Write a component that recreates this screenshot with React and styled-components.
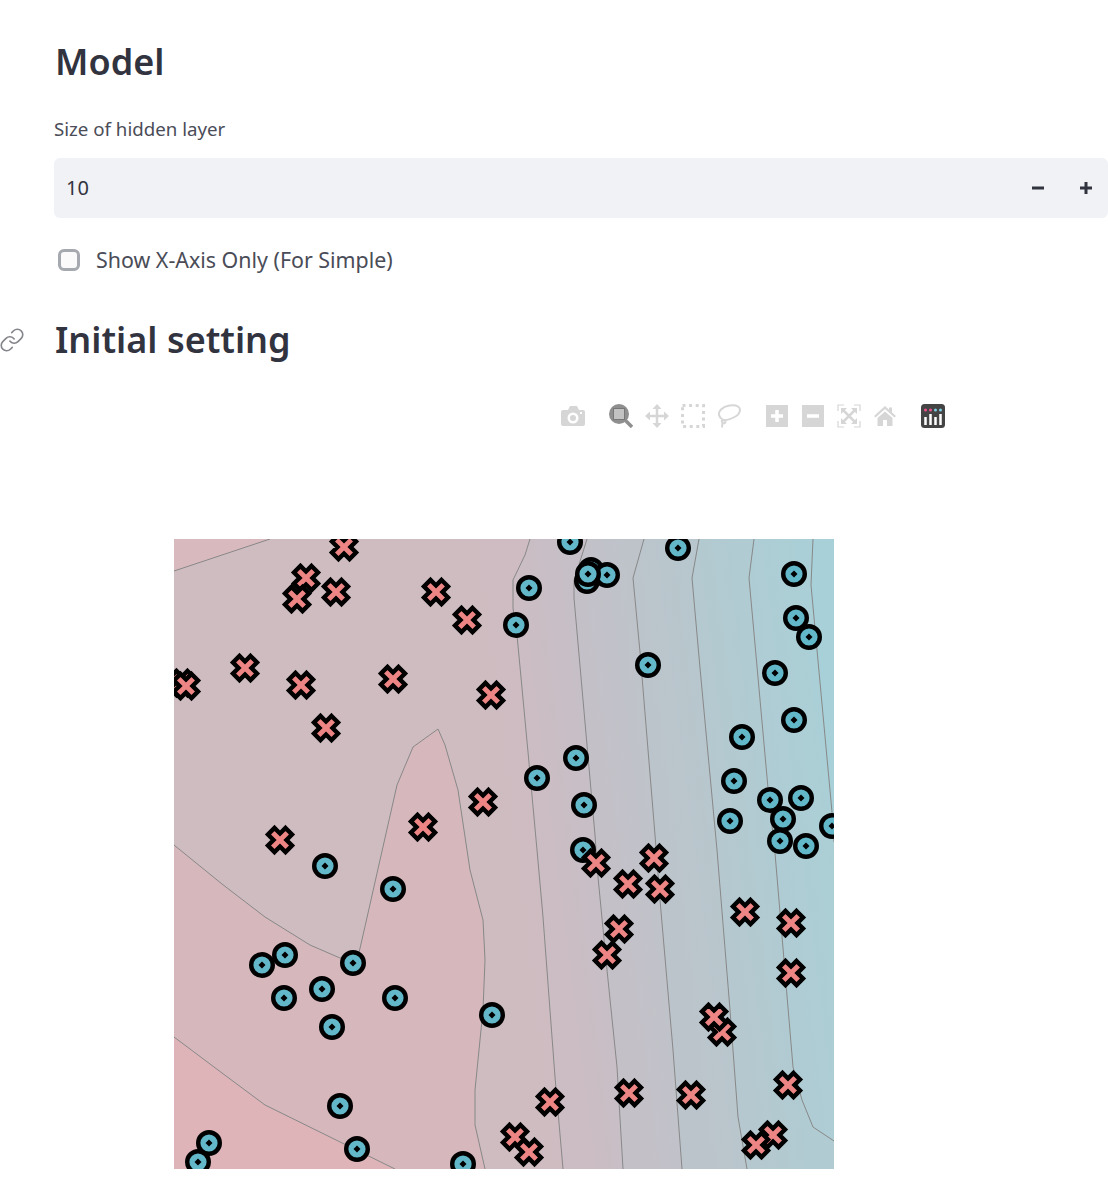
import React from 'react'
import styled, { createGlobalStyle } from 'styled-components'
import { Link } from 'lucide-react'

const GlobalStyle = createGlobalStyle`
  html, body {
    margin: 0;
    padding: 0;
    background: #fff;
    overflow: hidden;
  }
  body {
    font-family: "Noto Sans", "Lato", sans-serif;
    color: #31333f;
  }
`

// contour lines, page coordinates (the svg viewBox starts at 174,539)
const LINE_CORNER = [[174, 571], [270, 539]]
const LINE_BOTTOM = [[174, 1037], [222, 1073], [265, 1105], [330, 1137], [395, 1169]]
const LINE_BUMP = [
  [174, 845], [222, 884], [265, 917], [310, 945], [340, 958], [358, 957], [366, 922], [380, 860], [397, 785],
  [413, 747], [438, 729], [445, 745], [458, 790], [470, 870], [483, 920], [485, 960], [483, 1010], [475, 1090],
  [475, 1125], [485, 1169],
]
const BANDS = [
  { id: 'i', from: '#afccd4', to: '#abcfd6', points: [[813, 539], [811, 585], [832, 812], [834, 842], [834, 1169], [174, 1169], [174, 539]], line: [[813, 539], [811, 585], [832, 812], [834, 842]] },
  { id: 'h', from: '#b5c8cf', to: '#b0cbd2', points: [[754, 539], [749, 578], [768, 788], [775, 853], [793, 1067], [802, 1100], [813, 1127], [834, 1141], [834, 1169], [174, 1169], [174, 539]], line: [[754, 539], [749, 578], [768, 788], [775, 853], [793, 1067], [802, 1100], [813, 1127], [834, 1141]] },
  { id: 'g', from: '#bcc4cb', to: '#b7c7cd', points: [[699, 539], [692, 578], [700, 668], [717, 850], [730, 1010], [738, 1117], [747, 1169], [174, 1169], [174, 539]], line: [[699, 539], [692, 578], [700, 668], [717, 850], [730, 1010], [738, 1117], [747, 1169]] },
  { id: 'f', from: '#c4c0c8', to: '#bec3ca', points: [[644, 539], [633, 578], [640, 652], [655, 835], [660, 900], [673, 1050], [682, 1169], [174, 1169], [174, 539]], line: [[644, 539], [633, 578], [640, 652], [655, 835], [660, 900], [673, 1050], [682, 1169]] },
  { id: 'e', from: '#cbbdc3', to: '#c6bfc7', points: [[587, 539], [582, 555], [574, 580], [574, 598], [587, 745], [595, 835], [598, 877], [607, 970], [617, 1067], [623, 1169], [174, 1169], [174, 539]], line: [[587, 539], [582, 555], [574, 580], [574, 598], [587, 745], [595, 835], [598, 877], [607, 970], [617, 1067], [623, 1169]] },
  { id: 'd', from: '#cfbcc1', to: '#cebcc2', points: [[530, 539], [525, 555], [513, 580], [513, 608], [517, 635], [528, 752], [537, 850], [543, 917], [555, 1077], [563, 1169], [174, 1169], [174, 539]], line: [[530, 539], [525, 555], [513, 580], [513, 608], [517, 635], [528, 752], [537, 850], [543, 917], [555, 1077], [563, 1169]] },
]

const CIRCLES = [
  [570, 542], [678, 548], [591, 570], [587, 581], [607, 575], [588, 574], [529, 588], [516, 625], [794, 574], [796, 618],
  [809, 637], [648, 665], [775, 673], [794, 720], [742, 737], [576, 758], [537, 778], [734, 781], [770, 800], [801, 798],
  [783, 819], [730, 821], [584, 805], [780, 841], [806, 846], [832, 826], [583, 850], [325, 866], [393, 889], [353, 963],
  [285, 955], [262, 965], [322, 989], [284, 998], [395, 998], [332, 1027], [492, 1015], [340, 1106], [198, 1162],
  [209, 1143], [357, 1149], [463, 1164],
]

const CROSSES = [
  [344, 547], [306, 578], [297, 599], [336, 592], [436, 592], [467, 620], [245, 668], [182, 683], [186, 686], [301, 685],
  [393, 679], [491, 695], [326, 728], [483, 802], [423, 827], [280, 840], [596, 863], [654, 858], [628, 884], [660, 889],
  [619, 929], [607, 955], [745, 912], [791, 923], [791, 973], [722, 1032], [714, 1017], [788, 1085], [773, 1135],
  [756, 1145], [629, 1093], [691, 1095], [550, 1102], [515, 1137], [529, 1152],
]

const toPoints = (list) => list.map((p) => p.join(',')).join(' ')

const Contours = () => (
  <>
    <defs>
      {BANDS.map((b) => {
        const [mx, my] = b.line[2]
        return (
          <linearGradient key={b.id} id={`band-${b.id}`} gradientUnits="userSpaceOnUse" x1={mx - 55} y1={my + 7} x2={mx} y2={my}>
            <stop offset="0" stopColor={b.from} />
            <stop offset="1" stopColor={b.to} />
          </linearGradient>
        )
      })}
    </defs>
    <rect x="174" y="539" width="660" height="630" fill="#a7d0d8" />
    {BANDS.map((b) => (
      <polygon key={b.id} points={toPoints(b.points)} fill={`url(#band-${b.id})`} />
    ))}
    <polygon points={toPoints([...LINE_BUMP, [174, 1169]])} fill="#d6b7bc" />
    <polygon points={toPoints([...LINE_CORNER, [174, 539]])} fill="#d8b9be" />
    <polygon points={toPoints([...LINE_BOTTOM, [174, 1169]])} fill="#deb4b9" />
    {[LINE_CORNER, LINE_BOTTOM, LINE_BUMP, ...BANDS.map((b) => b.line)].map((line, i) => (
      <polyline key={i} points={toPoints(line)} fill="none" stroke="#888" strokeWidth="1" />
    ))}
  </>
)

const CircleDot = ({ x, y }) => (
  <g transform={`translate(${x} ${y})`}>
    <circle r="10.800" fill="#62b7c8" stroke="#000" strokeWidth="4.400" />
    <polygon points="0,-3.500 3.500,0 0,3.500 -3.500,0" fill="#000" />
  </g>
)

const Cross = ({ x, y }) => (
  <g transform={`translate(${x} ${y}) rotate(45)`}>
    <polygon
      points="-4.600,-12.400 4.600,-12.400 4.600,-4.600 12.400,-4.600 12.400,4.600 4.600,4.600 4.600,12.400 -4.600,12.400 -4.600,4.600 -12.400,4.600 -12.400,-4.600 -4.600,-4.600"
      fill="#ee8585"
      stroke="#000"
      strokeWidth="4.400"
    />
  </g>
)

const GREY = '#d6d6d6'

const Icon = ({ children }) => (
  <svg width="24" height="24" viewBox="0 0 24 24">{children}</svg>
)

const CameraIcon = () => (
  <Icon>
    <path
      fillRule="evenodd"
      fill={GREY}
      d="M2 6h5l2-4h7l2 4h4a2 2 0 0 1 2 2v12a2 2 0 0 1-2 2H2a2 2 0 0 1-2-2V8a2 2 0 0 1 2-2zM12 8.500a5.500 5.500 0 1 0 0 11 5.500 5.500 0 0 0 0-11zM12 11a3 3 0 1 1 0 6 3 3 0 0 1 0-6z"
    />
    <rect x="19" y="8" width="2" height="2" fill="#fff" />
  </Icon>
)

const ZoomIcon = () => (
  <Icon>
    <circle cx="10" cy="10" r="10" fill="#8f8f8f" />
    <rect x="4.500" y="4.500" width="11" height="11" fill="#c2c2c2" stroke="#777" strokeWidth="1" />
    <path d="M16.500 16.500L23 23" stroke="#8f8f8f" strokeWidth="3.500" />
  </Icon>
)

const PanIcon = () => (
  <Icon>
    <path d="M12 4v16M4 12h16" stroke={GREY} strokeWidth="2.500" />
    <path d="M12 0l4.500 5h-9zM12 24l4.500-5h-9zM0 12l5-4.500v9zM24 12l-5-4.500v9z" fill={GREY} />
  </Icon>
)

const BoxIcon = () => (
  <Icon>
    <rect x="1.500" y="1.500" width="21" height="21" fill="none" stroke={GREY} strokeWidth="3" strokeDasharray="3 3.600" />
  </Icon>
)

const LassoIcon = () => (
  <Icon>
    <path
      d="M6 16C1.500 13 .5 9 4 5.500 8 1.500 17 0 21 2.500c3.500 2.200 2 7.500-2.500 10-3.500 2-8 3.500-11 3.500-2.500 0-3.500 1-2 2.500s3 .8 3-.7c0-2-2.500-2.500-3-1M5.500 18L5 23.500"
      fill="none"
      stroke={GREY}
      strokeWidth="2"
    />
  </Icon>
)

const ZoomInIcon = () => (
  <Icon>
    <rect x="1" y="1" width="22" height="22" fill={GREY} />
    <path d="M12 6v12M6 12h12" stroke="#fff" strokeWidth="3.500" />
  </Icon>
)

const ZoomOutIcon = () => (
  <Icon>
    <rect x="1" y="1" width="22" height="22" fill={GREY} />
    <path d="M6 12h12" stroke="#fff" strokeWidth="3.500" />
  </Icon>
)

const AutoscaleIcon = () => (
  <Icon>
    <path d="M7 1H1v6M17 1h6v6M7 23H1v-6M17 23h6v-6" fill="none" stroke={GREY} strokeWidth="1.200" />
    <path d="M6 6l12 12M18 6L6 18" stroke={GREY} strokeWidth="2.500" />
    <path d="M4 4h6l-6 6zM20 4h-6l6 6zM4 20h6l-6-6zM20 20h-6l6-6z" fill={GREY} />
  </Icon>
)

const HomeIcon = () => (
  <Icon>
    <path d="M12 2L1 12l1.500 1.500L12 5l9.500 8.500L23 12l-4-3.600V3.500h-3v2.200z" fill={GREY} />
    <path d="M4.500 14L12 7.500l7.500 6.500v8h-5.500v-6h-4v6H4.500z" fill={GREY} />
  </Icon>
)

const LOGO_BARS = [
  { x: 4.500, top: 13, dot: '#f1508f' },
  { x: 9.500, top: 10, dot: '#f1508f' },
  { x: 14.500, top: 13, dot: '#7fd0e6' },
  { x: 19.500, top: 10, dot: '#7fd0e6' },
]

const LogoIcon = () => (
  <Icon>
    <rect width="24" height="24" rx="3.500" fill="#444" />
    {LOGO_BARS.map((b) => (
      <g key={b.x}>
        <circle cx={b.x} cy="6" r="1.500" fill={b.dot} />
        <path d={`M${b.x} ${b.top}V21`} stroke="#fff" strokeWidth="2.500" />
      </g>
    ))}
  </Icon>
)

const MODE_GROUPS = [
  [CameraIcon],
  [ZoomIcon, PanIcon, BoxIcon, LassoIcon],
  [ZoomInIcon, ZoomOutIcon, AutoscaleIcon, HomeIcon],
  [LogoIcon],
]

export default function App() {
  return (
    <Page>
      <GlobalStyle />
      <Heading>Model</Heading>
      <FieldLabel>Size of hidden layer</FieldLabel>
      <NumberField>
        <NumberValue>10</NumberValue>
        <Stepper>
          <svg width="12" height="12" viewBox="0 0 12 12"><path d="M0 6h12" stroke="#31333f" strokeWidth="3" /></svg>
        </Stepper>
        <Stepper>
          <svg width="12" height="12" viewBox="0 0 12 12"><path d="M0 6h12M6 0v12" stroke="#31333f" strokeWidth="3" /></svg>
        </Stepper>
      </NumberField>
      <CheckRow>
        <CheckBox />
        <CheckText>Show X-Axis Only (For Simple)</CheckText>
      </CheckRow>
      <AnchoredHeading>
        <AnchorIcon><Link size={26} strokeWidth={1.5} /></AnchorIcon>
        Initial setting
      </AnchoredHeading>
      <ModeBar>
        {MODE_GROUPS.map((group, i) => (
          <ModeGroup key={i}>
            {group.map((Glyph, j) => (
              <ModeButton key={j}><Glyph /></ModeButton>
            ))}
          </ModeGroup>
        ))}
      </ModeBar>
      <Plot viewBox="174 539 660 630">
        <Contours />
        {CIRCLES.map(([x, y], i) => <CircleDot key={i} x={x} y={y} />)}
        {CROSSES.map(([x, y], i) => <Cross key={i} x={x} y={y} />)}
      </Plot>
    </Page>
  )
}

const Page = styled.div`
  height: 1191px;
  padding: 39px 0 0 54px;
  box-sizing: border-box;
`

const Heading = styled.h2`
  margin: 0;
  padding-left: 1px;
  font-size: 36px;
  line-height: 46px;
  font-weight: 600;
  color: #31333f;
`

const AnchoredHeading = styled(Heading)`
  position: relative;
  margin-top: 44px;
`

const AnchorIcon = styled.span`
  position: absolute;
  left: -55px;
  top: 10px;
  display: flex;
  color: #85868c;
`

const FieldLabel = styled.div`
  margin-top: 32px;
  font-size: 18.700px;
  line-height: 24px;
  color: #4a4c57;
`

const NumberField = styled.div`
  display: flex;
  align-items: center;
  height: 60px;
  margin-top: 17px;
  padding-left: 12px;
  background: #f0f2f6;
  border-radius: 6px;
`

const NumberValue = styled.span`
  flex: 1;
  font-size: 20px;
  line-height: 24px;
  padding-bottom: 1px;
  color: #31333f;
`

const Stepper = styled.div`
  display: flex;
  align-items: center;
  justify-content: center;
  width: 48px;
  height: 100%;
  box-sizing: border-box;
  padding-left: 4px;
`

const CheckRow = styled.div`
  display: flex;
  align-items: center;
  gap: 16px;
  margin-top: 29px;
  padding-left: 4px;
  height: 26px;
`

const CheckBox = styled.span`
  width: 22px;
  height: 22px;
  box-sizing: border-box;
  background: #fafafa;
  border: 3px solid #a6a8b0;
  border-radius: 6px;
`

const CheckText = styled.span`
  font-size: 21.400px;
  line-height: 26px;
  color: #4a4c57;
`

const ModeBar = styled.div`
  display: flex;
  gap: 12px;
  margin: 35px 0 0 501px;
  height: 36px;
`

const ModeGroup = styled.div`
  display: flex;
`

const ModeButton = styled.div`
  display: flex;
  align-items: center;
  justify-content: center;
  width: 36px;
  height: 36px;
`

const Plot = styled.svg`
  display: block;
  width: 660px;
  height: 630px;
  margin: 105px 0 0 120px;
  overflow: hidden;
`
